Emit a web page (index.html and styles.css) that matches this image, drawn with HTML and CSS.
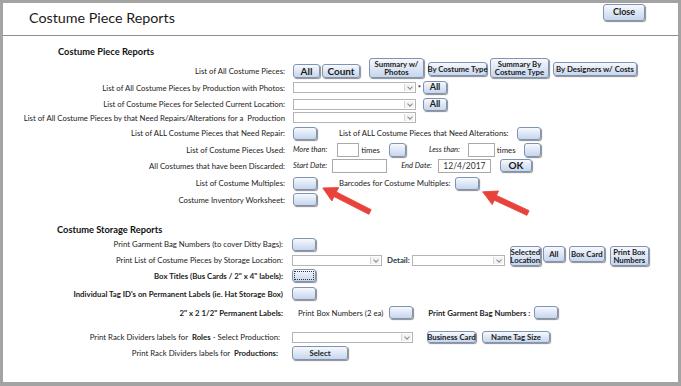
FILE: index.html
```html
<!DOCTYPE html>
<html lang="en">

<head>
      <meta charset="UTF-8">
      <meta name="viewport" content="width=device-width, initial-scale=1.0">
      <title>Costume Piece Reports</title>
      <link rel="stylesheet" href="styles.css">
</head>

<body>
      <div class="frame">
            <div class="window">
                  <!-- title bar -->
                  <div class="titlebar">
                        <h1>Costume Piece Reports</h1>
                        <button class="btn close" type="button">Close</button>
                  </div>

                  <!-- Costume Piece Reports -->
                  <div class="group">
                        <h2>Costume Piece Reports</h2>

                        <div class="row r1">
                              <span class="lbl">List of All Costume Pieces:</span>
                              <div class="ctrls">
                                    <button class="btn big b-all" type="button">All</button>
                                    <button class="btn big b-count" type="button">Count</button>
                                    <button class="btn tall b-sumphotos" type="button">Summary w/<br>Photos</button>
                                    <button class="btn low b-bytype" type="button">By Costume Type</button>
                                    <button class="btn tall b-sumtype" type="button">Summary By<br>Costume Type</button>
                                    <button class="btn low b-designers" type="button">By Designers w/ Costs</button>
                              </div>
                        </div>

                        <div class="row r2">
                              <span class="lbl">List of All Costume Pieces by Production with Photos:</span>
                              <div class="ctrls">
                                    <div class="combo w123"><span class="drop"></span></div>
                                    <span class="star">*</span>
                                    <button class="btn mid b-all2" type="button">All</button>
                              </div>
                        </div>

                        <div class="row r3">
                              <span class="lbl">List of Costume Pieces for Selected Current Location:</span>
                              <div class="ctrls">
                                    <div class="combo w123"><span class="drop"></span></div>
                                    <button class="btn mid b-all3" type="button">All</button>
                              </div>
                        </div>

                        <div class="row r4">
                              <span class="lbl">List of All Costume Pieces by that Need Repairs/Alterations for a&nbsp; Production</span>
                              <div class="ctrls">
                                    <div class="combo w123"><span class="drop"></span></div>
                              </div>
                        </div>

                        <div class="row r5">
                              <span class="lbl">List of ALL Costume Pieces that Need Repair:</span>
                              <div class="ctrls">
                                    <button class="btn blank" type="button"></button>
                                    <span class="txt alt-lbl">List of ALL Costume Pieces that Need Alterations:</span>
                                    <button class="btn blank alt-btn" type="button"></button>
                              </div>
                        </div>

                        <div class="row r6">
                              <span class="lbl">List of Costume Pieces Used:</span>
                              <div class="ctrls">
                                    <span class="txt note">More than:</span>
                                    <div class="field more"></div>
                                    <span class="txt times">times</span>
                                    <button class="btn blank small b-more" type="button"></button>
                                    <span class="txt note less-lbl">Less than:</span>
                                    <div class="field less"></div>
                                    <span class="txt times">times</span>
                                    <button class="btn blank small b-less" type="button"></button>
                              </div>
                        </div>

                        <div class="row r7">
                              <span class="lbl">All Costumes that have been Discarded:</span>
                              <div class="ctrls">
                                    <span class="txt note">Start Date:</span>
                                    <div class="field start"></div>
                                    <span class="txt note end-lbl">End Date:</span>
                                    <div class="field end">12/4/2017</div>
                                    <button class="btn big b-ok" type="button">OK</button>
                              </div>
                        </div>

                        <div class="row r8">
                              <span class="lbl">List of Costume Multiples:</span>
                              <div class="ctrls">
                                    <button class="btn blank" type="button"></button>
                                    <span class="txt barcode-lbl">Barcodes for Costume Multiples:</span>
                                    <button class="btn blank barcode-btn" type="button"></button>
                              </div>
                        </div>

                        <div class="row r9">
                              <span class="lbl">Costume Inventory Worksheet:</span>
                              <div class="ctrls">
                                    <button class="btn blank" type="button"></button>
                              </div>
                        </div>
                  </div>

                  <!-- Costume Storage Reports -->
                  <div class="group storage">
                        <h2>Costume Storage Reports</h2>

                        <div class="row s1">
                              <span class="lbl">Print Garment Bag Numbers (to cover Ditty Bags):</span>
                              <div class="ctrls">
                                    <button class="btn blank" type="button"></button>
                              </div>
                        </div>

                        <div class="row s2">
                              <span class="lbl">Print List of Costume Pieces by Storage Location:</span>
                              <div class="ctrls">
                                    <div class="combo w90"><span class="drop"></span></div>
                                    <span class="txt detail">Detail:</span>
                                    <div class="combo w93"><span class="drop"></span></div>
                                    <div class="btn-group">
                                          <button class="btn tall b-selloc" type="button">Selected<br>Location</button>
                                          <button class="btn b-all4" type="button">All</button>
                                          <button class="btn b-boxcard" type="button">Box Card</button>
                                          <button class="btn tall b-boxnum" type="button">Print Box<br>Numbers</button>
                                    </div>
                              </div>
                        </div>

                        <div class="row s3">
                              <span class="lbl strong">Box Titles (Bus Cards / 2" x 4" labels):</span>
                              <div class="ctrls">
                                    <button class="btn blank focus" type="button"></button>
                              </div>
                        </div>

                        <div class="row s4">
                              <span class="lbl strong">Individual Tag ID's on Permanent Labels (ie. Hat Storage Box)</span>
                              <div class="ctrls">
                                    <button class="btn blank" type="button"></button>
                              </div>
                        </div>

                        <div class="row s5">
                              <span class="lbl strong">2" x 2 1/2" Permanent Labels:</span>
                              <div class="ctrls">
                                    <span class="txt boxnum-lbl">Print Box Numbers (2 ea)</span>
                                    <button class="btn blank" type="button"></button>
                                    <span class="txt strong garment-lbl">Print Garment Bag Numbers :</span>
                                    <button class="btn blank" type="button"></button>
                              </div>
                        </div>

                        <div class="row s6">
                              <span class="lbl rack">Print Rack Dividers labels for&nbsp; <b>Roles</b> - Select Production:</span>
                              <div class="ctrls">
                                    <div class="combo w121"><span class="drop"></span></div>
                                    <button class="btn b-business" type="button">Business Card</button>
                                    <button class="btn b-nametag" type="button">Name Tag Size</button>
                              </div>
                        </div>

                        <div class="row s7">
                              <span class="lbl rack2">Print Rack Dividers labels for&nbsp; <b>Productions:</b></span>
                              <div class="ctrls">
                                    <button class="btn b-select" type="button">Select</button>
                              </div>
                        </div>
                  </div>

                  <!-- red pointer arrows -->
                  <svg class="arrows" width="675" height="379" viewBox="0 0 675 379">
                        <polygon class="arrow" points="0,-2.6 39,-2.6 39,-7.5 53,0 39,7.5 39,2.6 0,2.6" transform="translate(367 209) rotate(207)"></polygon>
                        <polygon class="arrow" points="0,-2.6 36,-2.6 36,-7.5 50,0 36,7.5 36,2.6 0,2.6" transform="translate(525 210) rotate(205)"></polygon>
                  </svg>
            </div>
      </div>
</body>

</html>
```

FILE: styles.css
```css
/* page + outer frame */
body {
      margin: 0;
      background-color: #a3a3a3;
      font-family: Lato, "Open Sans", sans-serif;
      color: #222;
}

.frame {
      padding: 3px 3px 4px 3px;
}

.window {
      position: relative;
      height: 379px;
      background-color: #fff;
}

/* title bar */
.titlebar {
      display: flex;
      justify-content: space-between;
      align-items: flex-start;
      height: 32px;
      border-bottom: 1px solid #8c8c8c;
}

.titlebar h1 {
      margin: 0;
      padding: 5px 0 0 26px;
      font-size: 14.3px;
      font-weight: normal;
      line-height: 20px;
      color: #1a1a1a;
}

/* buttons */
.btn {
      display: inline-flex;
      align-items: center;
      justify-content: center;
      flex: none;
      padding: 0;
      height: 14px;
      border: 1px solid #7f93b3;
      border-radius: 3px;
      background: linear-gradient(#f7f9fd, #dbe5f4 55%, #c7d6ee);
      box-shadow: 1px 1px 1px rgba(0, 0, 0, 0.45);
      font-family: Lato, "Open Sans", sans-serif;
      font-size: 7.8px;
      font-weight: bold;
      line-height: 8.5px;
      color: #1b1b1b;
      text-align: center;
}

.btn.close {
      width: 42px;
      height: 17px;
      margin: 1px 33px 0 0;
      font-size: 9px;
}

.btn.big {
      font-size: 10px;
}

.btn.tall {
      height: 20px;
}

.btn.blank {
      width: 24px;
      height: 13px;
}

.btn.small {
      width: 17px;
      height: 14px;
}

.btn.focus {
      outline: 1px dotted #333;
      outline-offset: -3px;
}

/* groups and rows */
.group h2 {
      margin: 10px 0 0 0;
      padding-left: 55px;
      font-size: 9.3px;
      font-weight: bold;
      line-height: 12px;
      color: #111;
}

.group.storage h2 {
      margin-top: 17px;
      padding-left: 54px;
}

.row {
      display: flex;
      align-items: center;
      font-size: 7.8px;
}

.lbl {
      flex: none;
      width: 282px;
      margin-right: 8px;
      text-align: right;
      white-space: nowrap;
      line-height: 12px;
}

.storage .lbl {
      width: 280px;
      margin-right: 9px;
}

.ctrls {
      display: flex;
      align-items: center;
      white-space: nowrap;
}

.txt {
      line-height: 12px;
}

.strong {
      font-weight: bold;
}

.note {
      font-style: italic;
      font-size: 7.5px;
}

/* row heights */
.r1 { height: 20px; align-items: flex-end; }
.r1 .lbl { line-height: 14px; }
.r1 .ctrls { align-items: flex-end; }
.r2 { height: 19px; }
.r3 { height: 14px; }
.r4 { height: 13px; }
.r5 { height: 18px; }
.r6 { height: 15px; }
.r7 { height: 17px; }
.r8 { height: 18px; }
.r9 { height: 15px; }

.s1 { height: 16px; }
.s2 { height: 15px; align-items: flex-end; }
.s2 .lbl { margin-bottom: 1px; }
.s2 .ctrls { align-items: flex-end; }
.s3 { height: 17px; }
.s4 { height: 19px; }
.s5 { height: 19px; }
.s6 { height: 14px; margin-top: 8px; }
.s7 { height: 18px; }

/* row 1 buttons */
.b-all { width: 27px; }
.b-count { width: 38px; margin-left: 2px; }
.b-sumphotos { width: 55px; margin-left: 9px; }
.b-bytype { width: 59px; margin-left: 4px; margin-bottom: 2px; }
.b-sumtype { width: 59px; margin-left: 3px; }
.b-designers { width: 84px; margin-left: 4px; margin-bottom: 2px; }

/* combo boxes */
.combo {
      position: relative;
      flex: none;
      height: 11px;
      border: 1px solid #b4b4b4;
      background-color: #fff;
      box-sizing: border-box;
}

.combo .drop {
      position: absolute;
      top: 1px;
      right: 1px;
      bottom: 1px;
      width: 9px;
      border-left: 1px solid #d6d6d6;
      background-color: #f4f4f4;
}

.combo .drop::after {
      content: "";
      position: absolute;
      left: 3px;
      top: 1px;
      width: 3px;
      height: 3px;
      border-right: 1px solid #8a8a8a;
      border-bottom: 1px solid #8a8a8a;
      transform: rotate(45deg);
}

.w123 { width: 123px; }
.w90 { width: 90px; margin-bottom: 1px; }
.w93 { width: 93px; margin-bottom: 1px; }
.w121 { width: 121px; }

.star {
      width: 7px;
      text-align: center;
      font-weight: bold;
      align-self: flex-start;
      margin-top: 2px;
}

.b-all2 { width: 24px; height: 13px; font-size: 9px; }
.b-all3 { width: 24px; height: 13px; font-size: 9px; margin-left: 7px; }

/* repair / alterations */
.alt-lbl { margin-left: 22px; }
.alt-btn { margin-left: 8px; }

/* text fields */
.field {
      flex: none;
      height: 14px;
      border: 1px solid #a9a9a9;
      box-sizing: border-box;
      background-color: #fff;
      font-size: 8.5px;
      line-height: 12px;
      color: #333;
      text-align: center;
}

.more { width: 22px; margin-left: 10px; }
.times { margin-left: 2px; }
.b-more { margin-left: 9px; }
.less-lbl { margin-left: 23px; }
.less { width: 27px; margin-left: 8px; }
.b-less { margin-left: 8px; }

.start { width: 55px; margin-left: 5px; }
.end-lbl { margin-left: 14px; }
.end { width: 53px; margin-left: 6px; }
.b-ok { width: 32px; height: 13px; margin-left: 9px; }

.barcode-lbl { margin-left: 22px; }
.barcode-btn { margin-left: 4px; }

/* storage rows */
.detail {
      margin-left: 5px;
      margin-right: 2px;
      margin-bottom: 1px;
      font-weight: bold;
      color: #24413f;
}

.btn-group {
      display: flex;
      align-items: flex-start;
      height: 21px;
      margin-left: 5px;
}

.b-selloc { width: 31px; height: 21px; }
.b-all4 { width: 22px; height: 16px; margin-left: 2px; }
.b-boxcard { width: 36px; height: 16px; margin-left: 4px; }
.b-boxnum { width: 39px; height: 21px; margin-left: 5px; }

.boxnum-lbl { margin-left: 6px; margin-right: 6px; }
.garment-lbl { margin-left: 15px; margin-right: 4px; }

.rack { padding-right: 3px; box-sizing: border-box; }
.rack2 { padding-right: 5px; box-sizing: border-box; }

.b-business { width: 49px; height: 12px; margin-left: 14px; }
.b-nametag { width: 68px; height: 12px; margin-left: 6px; }
.b-select { width: 56px; height: 14px; }

/* red arrows laid over the form */
.arrows {
      position: absolute;
      top: 0;
      left: 0;
      pointer-events: none;
}

.arrow {
      fill: #e8433b;
      stroke: #e8433b;
      stroke-width: 0.8;
      stroke-linejoin: round;
}
```
